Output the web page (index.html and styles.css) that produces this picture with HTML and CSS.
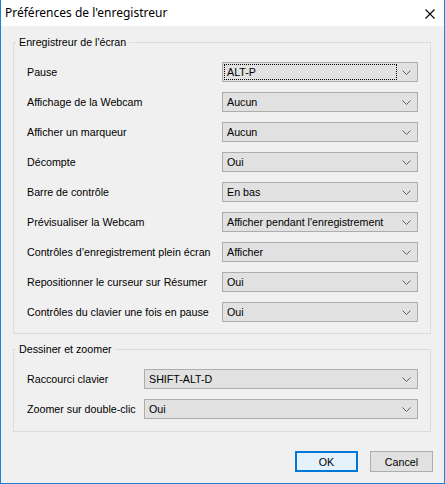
FILE: index.html
```html
<!DOCTYPE html>
<html lang="fr">
<head>
<meta charset="utf-8">
<title>Préférences de l'enregistreur</title>
<link rel="stylesheet" href="styles.css">
</head>
<body>
<div class="window">
  <div class="titlebar">
    <span class="title">Préférences de l'enregistreur</span>
    <svg class="close" width="10" height="10" viewBox="0 0 10 10"><path d="M0.5 0.5 L9.5 9.5 M9.5 0.5 L0.5 9.5" stroke="#000" stroke-width="1.1" fill="none"/></svg>
  </div>
  <div class="content">
    <fieldset class="group">
      <legend>Enregistreur de l'écran</legend>
      <div class="row"><span class="label">Pause</span><div class="select wide"><span class="field focused">ALT-P</span><span class="arrow"><svg width="9" height="5" viewBox="0 0 9 5"><polyline points="0.5,0.5 4.5,4.5 8.5,0.5" fill="none" stroke="#606060" stroke-width="1"/></svg></span></div></div>
      <div class="row"><span class="label">Affichage de la Webcam</span><div class="select wide"><span class="field">Aucun</span><span class="arrow"><svg width="9" height="5" viewBox="0 0 9 5"><polyline points="0.5,0.5 4.5,4.5 8.5,0.5" fill="none" stroke="#606060" stroke-width="1"/></svg></span></div></div>
      <div class="row"><span class="label">Afficher un marqueur</span><div class="select wide"><span class="field">Aucun</span><span class="arrow"><svg width="9" height="5" viewBox="0 0 9 5"><polyline points="0.5,0.5 4.5,4.5 8.5,0.5" fill="none" stroke="#606060" stroke-width="1"/></svg></span></div></div>
      <div class="row"><span class="label">Décompte</span><div class="select wide"><span class="field">Oui</span><span class="arrow"><svg width="9" height="5" viewBox="0 0 9 5"><polyline points="0.5,0.5 4.5,4.5 8.5,0.5" fill="none" stroke="#606060" stroke-width="1"/></svg></span></div></div>
      <div class="row"><span class="label">Barre de contrôle</span><div class="select wide"><span class="field">En bas</span><span class="arrow"><svg width="9" height="5" viewBox="0 0 9 5"><polyline points="0.5,0.5 4.5,4.5 8.5,0.5" fill="none" stroke="#606060" stroke-width="1"/></svg></span></div></div>
      <div class="row"><span class="label">Prévisualiser la Webcam</span><div class="select wide"><span class="field">Afficher pendant l'enregistrement</span><span class="arrow"><svg width="9" height="5" viewBox="0 0 9 5"><polyline points="0.5,0.5 4.5,4.5 8.5,0.5" fill="none" stroke="#606060" stroke-width="1"/></svg></span></div></div>
      <div class="row"><span class="label">Contrôles d’enregistrement plein écran</span><div class="select wide"><span class="field">Afficher</span><span class="arrow"><svg width="9" height="5" viewBox="0 0 9 5"><polyline points="0.5,0.5 4.5,4.5 8.5,0.5" fill="none" stroke="#606060" stroke-width="1"/></svg></span></div></div>
      <div class="row"><span class="label">Repositionner le curseur sur Résumer</span><div class="select wide"><span class="field">Oui</span><span class="arrow"><svg width="9" height="5" viewBox="0 0 9 5"><polyline points="0.5,0.5 4.5,4.5 8.5,0.5" fill="none" stroke="#606060" stroke-width="1"/></svg></span></div></div>
      <div class="row"><span class="label">Contrôles du clavier une fois en pause</span><div class="select wide"><span class="field">Oui</span><span class="arrow"><svg width="9" height="5" viewBox="0 0 9 5"><polyline points="0.5,0.5 4.5,4.5 8.5,0.5" fill="none" stroke="#606060" stroke-width="1"/></svg></span></div></div>
    </fieldset>
    <fieldset class="group group2">
      <legend>Dessiner et zoomer</legend>
      <div class="row"><span class="label">Raccourci clavier</span><div class="select long"><span class="field">SHIFT-ALT-D</span><span class="arrow"><svg width="9" height="5" viewBox="0 0 9 5"><polyline points="0.5,0.5 4.5,4.5 8.5,0.5" fill="none" stroke="#606060" stroke-width="1"/></svg></span></div></div>
      <div class="row"><span class="label">Zoomer sur double-clic</span><div class="select long"><span class="field">Oui</span><span class="arrow"><svg width="9" height="5" viewBox="0 0 9 5"><polyline points="0.5,0.5 4.5,4.5 8.5,0.5" fill="none" stroke="#606060" stroke-width="1"/></svg></span></div></div>
    </fieldset>
    <div class="buttons">
      <button class="btn default">OK</button>
      <button class="btn">Cancel</button>
    </div>
  </div>
</div>
</body>
</html>
```
FILE: styles.css
```css
html, body {
  margin: 0;
  padding: 0;
}
body {
  width: 445px;
  height: 484px;
  background: #f0f0f0;
  font-family: "Liberation Sans", Arial, sans-serif;
  font-size: 10.7px;
  color: #000;
  overflow: hidden;
}
.window {
  box-sizing: border-box;
  width: 445px;
  height: 484px;
  border: 1px solid #1883d7;
  border-top: none;
  display: flex;
  flex-direction: column;
  background: #f0f0f0;
}
.titlebar {
  height: 26px;
  flex: none;
  background: #fff;
  display: flex;
  align-items: center;
  justify-content: space-between;
  padding: 0 9px 0 4px;
}
.title {
  font-family: "Noto Sans", "Open Sans", sans-serif;
  font-size: 12px;
  padding-bottom: 1px;
}
.close {
  display: block;
  margin-top: 1px;
}
.content {
  flex: 1;
  display: flex;
  flex-direction: column;
  padding: 0 0 0 12px;
}
.group {
  box-sizing: border-box;
  width: 418px;
  margin: 10px 0 0 0;
  padding: 13px 12px 11px 0;
  border: 1px solid #dcdcdc;
  display: flex;
  flex-direction: column;
  gap: 10px;
  min-width: 0;
}
.group2 {
  margin-top: 9px;
  padding-bottom: 12px;
}
legend {
  margin-left: 2px;
  padding: 0 3px;
  line-height: 13px;
  font-size: 10.7px;
}
.row {
  display: flex;
  align-items: center;
  height: 20px;
  padding-left: 13px;
}
.label {
  flex: 1;
  white-space: nowrap;
}
.select {
  box-sizing: border-box;
  height: 20px;
  border: 1px solid #adadad;
  background: #e1e1e1;
  padding: 1px;
  display: flex;
  align-items: stretch;
}
.select.wide { width: 196px; }
.select.long { width: 274px; }
.field {
  flex: 1;
  box-sizing: border-box;
  border: 1px dotted transparent;
  padding-left: 2px;
  display: flex;
  align-items: center;
  white-space: nowrap;
  overflow: hidden;
}
.field.focused {
  border-color: #000;
}
.arrow {
  width: 19px;
  flex: none;
  display: flex;
  align-items: center;
  justify-content: center;
}
.arrow svg { display: block; }
.buttons {
  margin-top: auto;
  display: flex;
  justify-content: flex-end;
  gap: 12px;
  padding: 0 11px 11px 0;
}
.btn {
  box-sizing: border-box;
  width: 63px;
  height: 21px;
  font-family: "Liberation Sans", Arial, sans-serif;
  font-size: 10.7px;
  color: #000;
  background: #e1e1e1;
  border: 1px solid #adadad;
  padding: 0;
  margin: 0;
}
.btn.default {
  background: #e5f1fb;
  border: 2px solid #0078d7;
}
```
